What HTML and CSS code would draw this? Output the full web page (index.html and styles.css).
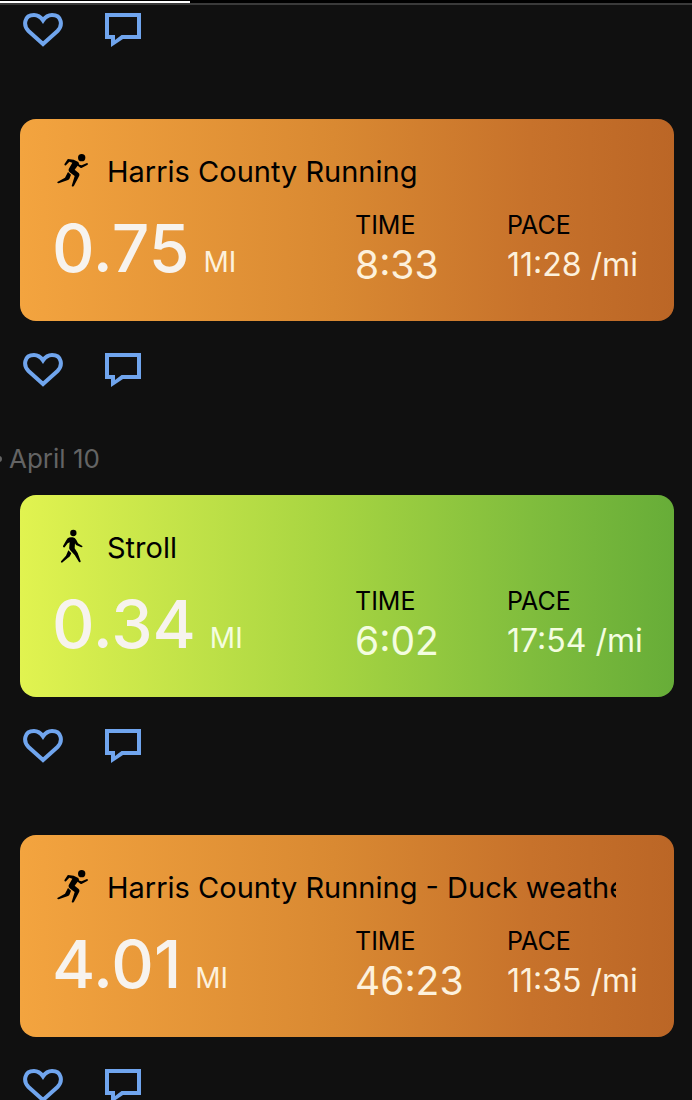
FILE: index.html
```html
<!DOCTYPE html>
<html lang="en">
<head>
    <meta charset="UTF-8">
    <meta name="viewport" content="width=device-width, initial-scale=1.0">
    <title>Activity</title>
    <link rel="stylesheet" href="styles.css">
</head>
<body>
    <!-- Shared icons -->
    <svg class="sprite" aria-hidden="true">
        <symbol id="heart" viewBox="0 0 40 34">
            <path d="M20 31L5.5 18C0 12.500 1 2 11 2C15 2 18 4.500 20 7.500C22 4.500 25 2 29 2C39 2 40 12.500 34.500 18Z" fill="none" stroke="currentColor" stroke-width="4"/>
        </symbol>
        <symbol id="comment" viewBox="0 0 36 34">
            <path d="M0 0H36V26H18L6 34V26H0ZM4 4V22H10V27L16.500 22H32V4Z" fill="currentColor" fill-rule="evenodd"/>
        </symbol>
        <symbol id="run" viewBox="0 0 96 102">
            <circle cx="74" cy="14" r="11"/>
            <path d="M33 18L50 20L64 27L67 35L74 37L90 30Q94 31 92 35L75 44Q71 46 68 43L62 38L53 50L65 60Q69 64 66 70L51 98Q47 103 44 99L53 69L38 58Q32 52 37 45L46 29L37 26L27 37Q23 39 22 34L31 20Q32 18 33 18Z"/>
            <path d="M33 57L42 65L37 78Q35 81 31 82L5 91Q0 91 1 87L24 74Z"/>
        </symbol>
        <symbol id="walk" viewBox="0 0 96 102">
            <circle cx="49" cy="12" r="9.500"/>
            <path d="M32 28Q38 23 47 25Q54 26 58 33L63 43L76 51Q78 55 73 55L57 48L54 43L53 58L62 72L71 97Q71 101 66 99L53 78L39 63Q35 58 37 52L38 40L32 43L23 55Q17 56 18 51L27 35Z"/>
            <path d="M34 64L43 73L39 81Q37 84 33 86L15 101Q10 101 12 97L27 80Z"/>
        </symbol>
    </svg>

    <header class="tabbar">
        <div class="tab-indicator"></div>
    </header>

    <main class="feed">
        <article class="post post-cut">
            <div class="actions">
                <button class="action" type="button" aria-label="Like"><svg class="heart"><use href="#heart"/></svg></button>
                <button class="action" type="button" aria-label="Comment"><svg class="comment"><use href="#comment"/></svg></button>
            </div>
        </article>

        <article class="post">
            <div class="card run">
                <div class="card-title">
                    <svg class="sport" aria-hidden="true"><use href="#run"/></svg>
                    <h2>Harris County Running</h2>
                </div>
                <div class="card-body">
                    <p class="distance">0.75 <span class="unit">MI</span></p>
                    <dl class="stat">
                        <dt>TIME</dt>
                        <dd>8:33</dd>
                    </dl>
                    <dl class="stat pace">
                        <dt>PACE</dt>
                        <dd>11:28 /mi</dd>
                    </dl>
                </div>
            </div>
            <div class="actions">
                <button class="action" type="button" aria-label="Like"><svg class="heart"><use href="#heart"/></svg></button>
                <button class="action" type="button" aria-label="Comment"><svg class="comment"><use href="#comment"/></svg></button>
            </div>
        </article>

        <article class="post">
            <div class="date">April 10</div>
            <div class="card walk">
                <div class="card-title">
                    <svg class="sport" aria-hidden="true"><use href="#walk"/></svg>
                    <h2>Stroll</h2>
                </div>
                <div class="card-body">
                    <p class="distance">0.34 <span class="unit">MI</span></p>
                    <dl class="stat">
                        <dt>TIME</dt>
                        <dd>6:02</dd>
                    </dl>
                    <dl class="stat pace">
                        <dt>PACE</dt>
                        <dd>17:54 /mi</dd>
                    </dl>
                </div>
            </div>
            <div class="actions">
                <button class="action" type="button" aria-label="Like"><svg class="heart"><use href="#heart"/></svg></button>
                <button class="action" type="button" aria-label="Comment"><svg class="comment"><use href="#comment"/></svg></button>
            </div>
        </article>

        <article class="post">
            <div class="card run">
                <div class="card-title">
                    <svg class="sport" aria-hidden="true"><use href="#run"/></svg>
                    <h2>Harris County Running - Duck weather</h2>
                </div>
                <div class="card-body">
                    <p class="distance">4.01 <span class="unit">MI</span></p>
                    <dl class="stat">
                        <dt>TIME</dt>
                        <dd>46:23</dd>
                    </dl>
                    <dl class="stat pace">
                        <dt>PACE</dt>
                        <dd>11:35 /mi</dd>
                    </dl>
                </div>
            </div>
            <div class="actions">
                <button class="action" type="button" aria-label="Like"><svg class="heart"><use href="#heart"/></svg></button>
                <button class="action" type="button" aria-label="Comment"><svg class="comment"><use href="#comment"/></svg></button>
            </div>
        </article>
    </main>
</body>
</html>
```
FILE: styles.css
```css
* {
    box-sizing: border-box;
}

body {
    margin: 0;
    height: 100vh;
    overflow: hidden;
    background-color: #101010;
    font-family: Inter, "Liberation Sans", sans-serif;
}

h2, p, dl, dd {
    margin: 0;
    font-weight: 400;
}

.sprite {
    display: none;
}

/* Bottom edge of the tab bar */
.tabbar {
    padding-top: 1px;
    background-color: #000;
    border-bottom: 2px solid #3a3a3a;
}

.tab-indicator {
    width: 190px;
    height: 2px;
    background-color: #fff;
}

.post {
    display: flow-root;
    margin-bottom: 56px;
}

.date {
    display: flex;
    align-items: center;
    gap: 7px;
    color: #646464;
    font-size: 26px;
    line-height: 32px;
    padding-bottom: 4px;
}

.date::before {
    content: "";
    width: 6px;
    height: 6px;
    margin-left: -4px;
    border-radius: 50%;
    background-color: #646464;
}

.card {
    margin: 16px 18px 0 20px;
    padding: 34px 32px 32px;
    border-radius: 16px;
    color: #000;
}

.card.run {
    background: linear-gradient(90deg, #f3a43f 0%, #d98932 48%, #c7722b 78%, #bb6626 100%);
}

.card.walk {
    background: linear-gradient(90deg, #e1f350 0%, #a6d441 48%, #80bd3d 78%, #67ad38 100%);
}

.card-title {
    display: flex;
    gap: 18px;
    padding-left: 5px;
    padding-right: 26px;
}

.card-title h2 {
    flex: 1;
    overflow: hidden;
    white-space: nowrap;
    font-size: 29px;
    line-height: 38px;
}

.sport {
    flex: none;
    width: 32px;
    height: 34px;
}

.card-body {
    display: grid;
    grid-template-columns: 1fr 152px 135px;
    margin-top: 18px;
}

.distance {
    display: flex;
    align-items: baseline;
    gap: 14px;
    color: #f7f3ee;
    font-size: 66px;
    font-weight: 500;
    line-height: 78px;
    white-space: nowrap;
}

.unit {
    font-size: 28px;
    font-weight: 400;
    line-height: 32px;
    color: #fdf1dc;
}

.stat dt {
    font-size: 25px;
    line-height: 32px;
}

.stat dd {
    color: #fdf1dc;
    font-size: 39px;
    line-height: 48px;
    white-space: nowrap;
}

.stat.pace dd {
    font-size: 32px;
}

.walk .unit,
.walk dd {
    color: #f4fde0;
}

/* Like and comment */
.actions {
    display: flex;
    gap: 42px;
    padding: 32px 23px 0;
}

.post-cut .actions {
    padding-top: 8px;
}

.action {
    padding: 0;
    border: none;
    background: none;
    color: #70a5ee;
    cursor: pointer;
}

.action svg {
    display: block;
    height: 34px;
}

.heart {
    width: 40px;
}

.comment {
    width: 36px;
}
```
